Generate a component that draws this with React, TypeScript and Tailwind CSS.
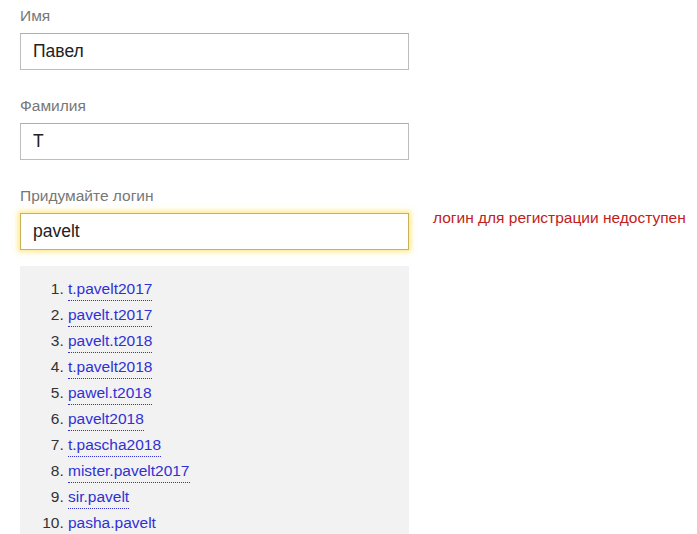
const suggestions = [
  "t.pavelt2017",
  "pavelt.t2017",
  "pavelt.t2018",
  "t.pavelt2018",
  "pawel.t2018",
  "pavelt2018",
  "t.pascha2018",
  "mister.pavelt2017",
  "sir.pavelt",
  "pasha.pavelt",
];

interface FieldProps {
  label: string;
  value: string;
  focused?: boolean;
}

const Field: React.FC<FieldProps> = ({ label, value, focused }) => {
  return (
    <div className="flex flex-col">
      <label className="text-[15.5px] leading-[18px] text-[#777] mb-2">{label}</label>
      <div
        className={
          focused
            ? "h-[37px] w-[389px] border border-[#c9b15a] bg-white shadow-[0_0_5px_2px_rgba(255,215,40,0.55)] flex items-center px-3"
            : "h-[37px] w-[389px] border border-[#bdbdbd] border-t-[#adadad] bg-white flex items-center px-3"
        }
      >
        <span className="text-[17.5px] text-[#222]">{value}</span>
      </div>
    </div>
  );
};

export default function App() {
  return (
    <div className="w-[697px] h-[534px] overflow-hidden bg-white font-['Liberation_Sans',Arial,sans-serif] pl-5 pt-[7px]">
      <div className="flex flex-col gap-[27px]">
        <Field label="Имя" value="Павел" />
        <Field label="Фамилия" value="Т" />
        <div className="flex items-start">
          <Field label="Придумайте логин" value="pavelt" focused />
          <p className="ml-6 mt-[22px] text-[15.5px] leading-[18px] text-[#c2201b]">логин для регистрации недоступен</p>
        </div>
      </div>
      <div className="mt-4 w-[389px] h-[300px] bg-[#f2f2f2] pt-[10px]">
        <ol className="list-decimal pl-12 text-[15.5px] leading-[26px] text-[#333]">
          {suggestions.map((s) => (
            <li key={s}>
              <span className="text-[#3030d6] border-b border-dotted border-[#3030d6] pb-[3px] cursor-pointer">{s}</span>
            </li>
          ))}
        </ol>
      </div>
    </div>
  );
}
